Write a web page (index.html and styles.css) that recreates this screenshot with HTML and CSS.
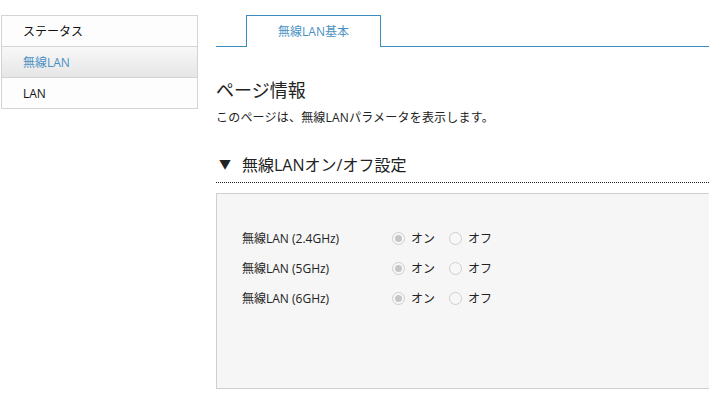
FILE: index.html
```html
<!DOCTYPE html>
<html lang="ja">
<head>
    <meta charset="UTF-8">
    <title>無線LAN基本</title>
    <link rel="stylesheet" href="styles.css">
</head>
<body>
    <div class="page">
        <ul class="side-menu">
            <li>ステータス</li>
            <li class="active">無線LAN</li>
            <li>LAN</li>
        </ul>

        <div class="main">
            <div class="tabs">
                <div class="tab selected">無線LAN基本</div>
            </div>

            <h1>ページ情報</h1>
            <p class="info">このページは、無線LANパラメータを表示します。</p>

            <h2 class="section-title"><span class="arrow">▼</span>無線LANオン/オフ設定</h2>

            <div class="panel">
                <div class="setting-row">
                    <span class="setting-label">無線LAN (2.4GHz)</span>
                    <span class="radio checked"></span><span class="radio-text">オン</span>
                    <span class="radio"></span><span class="radio-text">オフ</span>
                </div>
                <div class="setting-row">
                    <span class="setting-label">無線LAN (5GHz)</span>
                    <span class="radio checked"></span><span class="radio-text">オン</span>
                    <span class="radio"></span><span class="radio-text">オフ</span>
                </div>
                <div class="setting-row">
                    <span class="setting-label">無線LAN (6GHz)</span>
                    <span class="radio checked"></span><span class="radio-text">オン</span>
                    <span class="radio"></span><span class="radio-text">オフ</span>
                </div>
            </div>
        </div>
    </div>
</body>
</html>
```

FILE: styles.css
```css
body {
    margin: 0;
    font-family: "Open Sans", "Noto Sans CJK JP", sans-serif;
    color: #222;
    background: #fff;
    overflow: hidden;
}
.page {
    display: flex;
    align-items: flex-start;
    padding-top: 15px;
}
.side-menu {
    list-style: none;
    margin: 0 0 0 1px;
    padding: 0;
    width: 195px;
    border: 1px solid #d4d4d4;
    flex-shrink: 0;
}
.side-menu li {
    height: 30px;
    line-height: 31px;
    padding-left: 21px;
    font-size: 12px;
    color: #111;
    background: #fdfdfd;
    border-top: 1px solid #d4d4d4;
}
.side-menu li:first-child {
    border-top: none;
}
.side-menu li.active {
    color: #4a8fc4;
    background: linear-gradient(#f8f8f8, #e6e6e6);
}
.main {
    margin-left: 18px;
    width: 520px;
    flex-shrink: 0;
}
.tabs {
    display: flex;
    height: 31px;
    padding-left: 30px;
    border-bottom: 1px solid #3d8cc0;
}
.tab {
    width: 133px;
    height: 31px;
    border: 1px solid #3d8cc0;
    border-bottom: none;
    background: #fff;
    color: #4a90c2;
    font-size: 12px;
    line-height: 31px;
    text-align: center;
    margin-bottom: -1px;
}
h1 {
    font-size: 18px;
    font-weight: normal;
    margin: 30px 0 0 0;
    line-height: 26px;
    color: #222;
}
.info {
    font-size: 12px;
    margin: 7px 0 0 0;
    line-height: 16px;
    letter-spacing: 0.2px;
}
.section-title {
    font-size: 16px;
    font-weight: normal;
    margin: 27px 0 0 0;
    padding: 0 0 5px 0;
    line-height: 24px;
    width: 493px;
    border-bottom: 1px dotted #222;
}
.arrow {
    font-size: 12px;
    margin: 0 11px 0 3px;
    vertical-align: 2px;
}
.panel {
    margin-top: 10px;
    height: 196px;
    background: #f6f6f6;
    border: 1px solid #cfcfcf;
    box-sizing: border-box;
    padding-top: 29px;
    padding-left: 25px;
}
.setting-row {
    display: flex;
    align-items: center;
    height: 30px;
    font-size: 12px;
}
.setting-label {
    width: 150px;
}
.radio {
    width: 11px;
    height: 11px;
    border-radius: 50%;
    border: 1px solid #cfcfcf;
    background: #f7f7f7;
    position: relative;
    margin-right: 6px;
}
.radio.checked::after {
    content: "";
    position: absolute;
    left: 2px;
    top: 2px;
    width: 7px;
    height: 7px;
    border-radius: 50%;
    background: #c6c6c6;
}
.radio-text {
    margin-right: 14px;
}
```
